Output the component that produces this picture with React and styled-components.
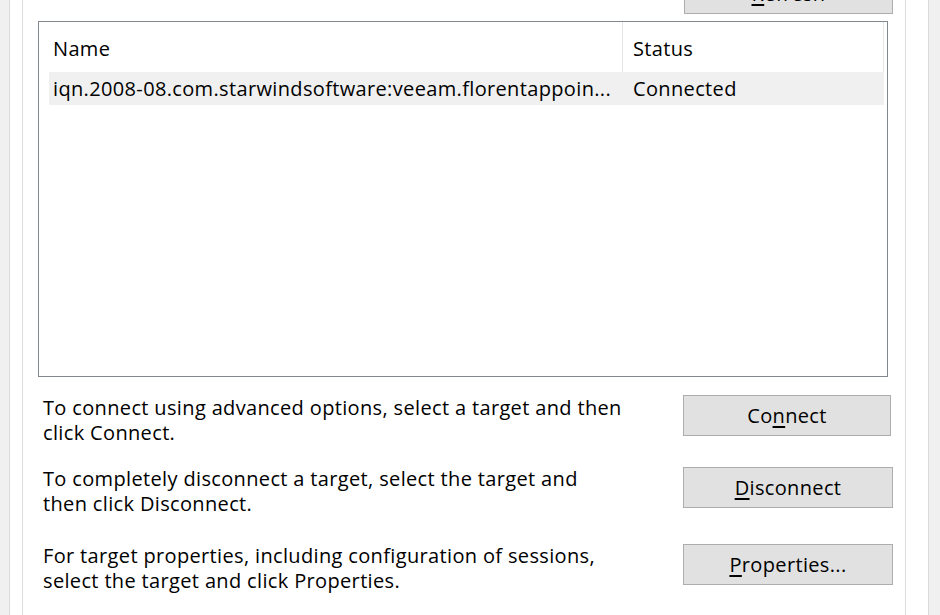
import React from "react";
import styled, { createGlobalStyle } from "styled-components";

const GlobalStyle = createGlobalStyle`
  body {
    margin: 0;
    background: #f0f0f0;
  }
  * {
    box-sizing: border-box;
  }
`;

const Window = styled.div`
  display: flex;
  width: 940px;
  height: 615px;
  padding: 0 11px 0 9px;
  background: #f0f0f0;
  overflow: hidden;
  font-family: "Open Sans", "Noto Sans", sans-serif;
  font-size: 20px;
  letter-spacing: 0.35px;
  color: #000;
`;

const TabPage = styled.div`
  flex: 1;
  background: #fff;
  border-left: 1px solid #d9d9d9;
  border-right: 1px solid #d9d9d9;
  padding: 0 22px 0 12px;
  overflow: hidden;
`;

const GroupBox = styled.div`
  margin-top: -27px;
  height: 700px;
  border-left: 1px solid #dcdcdc;
  border-right: 1px solid #dcdcdc;
  padding: 0 12px 0 15px;
  display: flex;
  flex-direction: column;
`;

const RefreshRow = styled.div`
  display: flex;
  justify-content: flex-end;
`;

const Button = styled.button`
  width: ${(p) => p.$width || 210}px;
  height: 41px;
  margin-top: ${(p) => p.$offset || 0}px;
  margin-right: ${(p) => p.$right || 0}px;
  flex: none;
  background: #e1e1e1;
  border: 1px solid #adadad;
  font-family: inherit;
  font-size: 20px;
  letter-spacing: 0.35px;
  color: #000;
  padding: 0;
  u {
    text-underline-offset: 3px;
  }
`;

const ListView = styled.div`
  margin-top: 7px;
  margin-right: 5px;
  height: 356px;
  border: 1px solid #828790;
  background: #fff;
`;

const HeaderRow = styled.div`
  display: flex;
  height: 50px;
`;

const HeaderCell = styled.div`
  width: ${(p) => p.$width}px;
  padding-left: ${(p) => p.$pad}px;
  padding-top: 2px;
  display: flex;
  align-items: center;
  border-right: 1px solid #e5e5e5;
  white-space: nowrap;
`;

const ItemRow = styled.div`
  display: flex;
  height: 33px;
  margin-left: 10px;
  width: 835px;
  background: ${(p) => (p.$hot ? "#f0f0f0" : "transparent")};
`;

const ItemCell = styled.div`
  width: ${(p) => p.$width}px;
  padding-left: ${(p) => p.$pad}px;
  display: flex;
  align-items: center;
  white-space: nowrap;
  overflow: hidden;
`;

const ActionRow = styled.div`
  display: flex;
  align-items: flex-start;
  justify-content: space-between;
  margin-top: ${(p) => p.$gap}px;
`;

const Description = styled.p`
  margin: 0;
  padding-left: 5px;
  line-height: 25px;
  white-space: nowrap;
`;

const actions = [
  {
    gap: 18,
    offset: 0,
    width: 208,
    right: 2,
    lines: ["To connect using advanced options, select a target and then", "click Connect."],
    label: (
      <>
        Co<u>n</u>nect
      </>
    ),
  },
  {
    gap: 21,
    offset: 1,
    width: 210,
    right: 0,
    lines: ["To completely disconnect a target, select the target and", "then click Disconnect."],
    label: (
      <>
        <u>D</u>isconnect
      </>
    ),
  },
  {
    gap: 27,
    offset: 1,
    width: 210,
    right: 0,
    lines: ["For target properties, including configuration of sessions,", "select the target and click Properties."],
    label: (
      <>
        <u>P</u>roperties...
      </>
    ),
  },
];

const App = () => {
  return (
    <Window>
      <GlobalStyle />
      <TabPage>
        <GroupBox>
          <RefreshRow>
            <Button $width={209}>
              <u>R</u>efresh
            </Button>
          </RefreshRow>
          <ListView>
            <HeaderRow>
              <HeaderCell $width={584} $pad={14}>
                Name
              </HeaderCell>
              <HeaderCell $width={261} $pad={10}>
                Status
              </HeaderCell>
            </HeaderRow>
            <ItemRow $hot>
              <ItemCell $width={573} $pad={4}>
                iqn.2008-08.com.starwindsoftware:veeam.florentappoin...
              </ItemCell>
              <ItemCell $width={262} $pad={11}>
                Connected
              </ItemCell>
            </ItemRow>
          </ListView>
          {actions.map((a, i) => (
            <ActionRow key={i} $gap={a.gap}>
              <Description>
                {a.lines[0]}
                <br />
                {a.lines[1]}
              </Description>
              <Button $width={a.width} $offset={a.offset} $right={a.right}>
                {a.label}
              </Button>
            </ActionRow>
          ))}
        </GroupBox>
      </TabPage>
    </Window>
  );
};

export default App;
